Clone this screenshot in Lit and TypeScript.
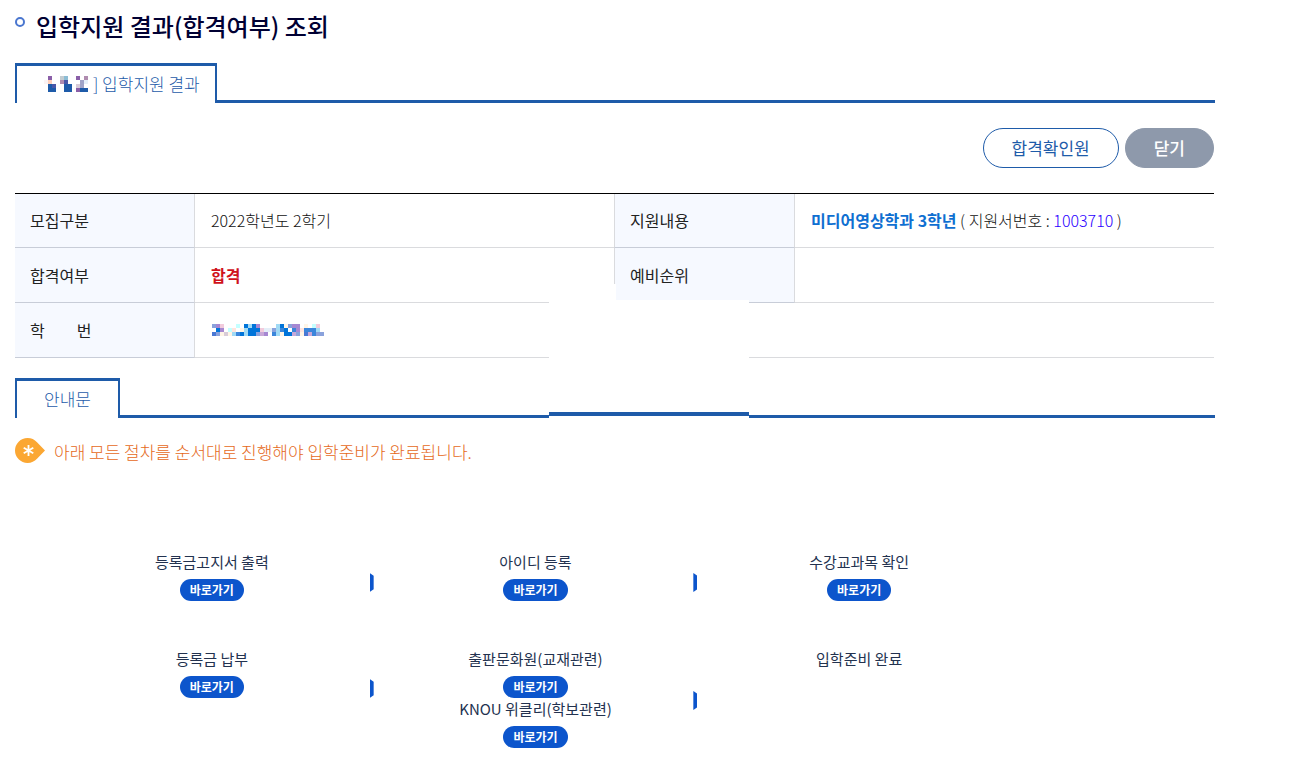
import { LitElement, html, css, svg } from "lit";
import { customElement, property } from "lit/decorators.js";

interface StepLink {
  title: string;
  link: boolean;
}

interface Step {
  items: StepLink[];
  arrow: "" | "high" | "middle" | "low";
}

const STEPS: Step[] = [
  { items: [{ title: "등록금고지서 출력", link: true }], arrow: "high" },
  { items: [{ title: "아이디 등록", link: true }], arrow: "high" },
  { items: [{ title: "수강교과목 확인", link: true }], arrow: "" },
  { items: [{ title: "등록금 납부", link: true }], arrow: "middle" },
  {
    items: [
      { title: "출판문화원(교재관련)", link: true },
      { title: "KNOU 위클리(학보관련)", link: true },
    ],
    arrow: "low",
  },
  { items: [{ title: "입학준비 완료", link: false }], arrow: "" },
];

/* Masked values: one letter per 4px block, "." is an empty block. */
const PALETTE: Record<string, string> = {
  N: "#1e5ba9",
  M: "#4a58a8",
  P: "#8a5fa8",
  L: "#b08cb0",
  K: "#d8ccd8",
  O: "#ffd0bc",
  W: "#fbf3f3",
  G: "#8cbcd4",
  S: "#c4ccd0",
  H: "#a0a4c8",
  B: "#0074d9",
  b: "#3b86db",
  m: "#4a78d4",
  l: "#8aa2dc",
  p: "#a688d2",
  q: "#c8a8d8",
  k: "#f2cbdc",
  c: "#c4ffff",
  s: "#a0daf5",
  o: "#ffe4de",
  y: "#fff5e6",
  g: "#e4eef8",
};

const NAME_BLOCKS = [
  ".P..SG..P.L",
  "WO..LM...Hg",
  ".NM..NN.KH.",
  ".NN..NN.PNN",
];
const NUMBER_BLOCKS = [
  "lpk...c.BsBp....sBylpp.y.ck.",
  ".Bp.co.ysBBBkgglsbB.bpobbbs.",
  "mlyKysbBsBBlqp.bsyBBqlymqbll",
];

@customElement("masked-text")
export class MaskedText extends LitElement {
  @property({ attribute: false }) rows: string[] = [""];

  static styles = css`
    :host {
      display: inline-block;
      line-height: 0;
    }
  `;

  render() {
    const w = this.rows[0].length * 4;
    const h = this.rows.length * 4;
    return html`<svg width=${w} height=${h} viewBox="0 0 ${w} ${h}" shape-rendering="crispEdges" aria-hidden="true">
      ${this.rows.map((row, y) =>
        [...row].map((c, x) =>
          c === "." ? null : svg`<rect x=${x * 4} y=${y * 4} width="4" height="4" fill=${PALETTE[c]} />`
        )
      )}
    </svg>`;
  }
}

@customElement("app-root")
export class AppRoot extends LitElement {
  static styles = css`
    :host {
      display: block;
      box-sizing: border-box;
      max-width: 1215px;
      padding: 8px 0 20px 15px;
      background: #fff;
      color: #111;
      font-family: "Noto Sans CJK KR", "Noto Sans", sans-serif;
      font-size: 16px;
      font-weight: 300;
      line-height: 24px;
    }
    * {
      box-sizing: border-box;
    }
    .heading {
      display: flex;
      gap: 11px;
      margin: 0 0 19px;
      color: #000033;
      font-size: 24px;
      font-weight: 500;
      line-height: 36px;
    }
    .dot {
      flex: none;
      width: 10px;
      height: 10px;
      margin-top: 9px;
      border: 2px solid #4a76cf;
      border-radius: 50%;
    }
    .tabs {
      display: flex;
      height: 40px;
    }
    .tab {
      display: flex;
      align-items: center;
      gap: 5px;
      margin: 0;
      padding: 0 15px 2px 27px;
      border: 2px solid #1e5ba9;
      border-top-width: 3px;
      border-bottom: 0;
      color: #1e5ba9;
      font-size: 17px;
      font-weight: 300;
      white-space: nowrap;
    }
    .tab.short {
      padding-right: 27px;
    }
    .rule {
      flex: 1;
      border-bottom: 3px solid #1e5ba9;
    }
    .actions {
      display: flex;
      justify-content: flex-end;
      gap: 6px;
      padding: 25px 1px 25px 0;
    }
    .btn {
      height: 40px;
      padding: 0 28px;
      border: 1px solid #1e5ba9;
      border-radius: 20px;
      background: #fff;
      color: #1e5ba9;
      font: 400 17px/24px "Noto Sans CJK KR", sans-serif;
      cursor: pointer;
    }
    .btn.close {
      border-color: #8e99ab;
      background: #8e99ab;
      color: #fff;
      font-weight: 500;
    }
    .result {
      position: relative;
    }
    .info {
      width: calc(100% - 1px);
      border-top: 1px solid #000;
      border-collapse: separate;
      border-spacing: 0;
      table-layout: fixed;
      margin-bottom: 20px;
    }
    .info .label {
      width: 180px;
    }
    .info .label.second {
      width: 181px;
    }
    .info th,
    .info td {
      height: 55px;
      padding: 0 16px;
      border-bottom: 1px solid #dadbde;
      text-align: left;
      vertical-align: middle;
    }
    .info tr:first-child th,
    .info tr:first-child td {
      height: 54px;
      padding-bottom: 2px;
    }
    .info th {
      padding-left: 15px;
      border-right: 1px solid #dadbde;
      border-bottom-color: #c8cdd8;
      background: #f6f9ff;
      color: #222;
      font-weight: 400;
    }
    .info td + th {
      border-left: 1px solid #dadbde;
    }
    .info masked-text {
      display: block;
      margin-left: 1px;
    }
    .spread {
      display: flex;
      gap: 32px;
    }
    .pass {
      color: #d0121b;
      font-weight: 700;
    }
    .major {
      color: #0f6fd1;
      font-weight: 700;
    }
    .number {
      color: #2a00ff;
    }
    .cover {
      position: absolute;
      top: 107px;
      bottom: 0;
      left: 534px;
      width: 200px;
      background: #fff;
    }
    .cover::before {
      content: "";
      position: absolute;
      top: -16px;
      left: 0;
      width: 67px;
      height: 16px;
      background: #fff;
    }
    .cover::after {
      content: "";
      position: absolute;
      bottom: 2px;
      left: 0;
      width: 100%;
      height: 4px;
      background: #1e5ba9;
    }
    .notice {
      display: flex;
      gap: 9px;
      margin: 20px 0 0;
      color: #e5691a;
      font-size: 17px;
      line-height: 28px;
    }
    .mark {
      flex: none;
      width: 30px;
      height: 25px;
    }
    .steps {
      display: grid;
      grid-template-columns: repeat(3, 1fr);
      max-width: 971px;
      margin: 85px 0 0 35px;
      padding: 0;
      list-style: none;
      row-gap: 47px;
      color: #23324f;
      font-size: 15px;
      font-weight: 400;
      line-height: 22px;
    }
    .step {
      display: flex;
    }
    .body {
      flex: 1;
    }
    .item {
      display: flex;
      flex-direction: column;
      align-items: center;
      gap: 6px;
    }
    .go {
      height: 22px;
      padding: 0 10px;
      border-radius: 11px;
      background: #0c55cc;
      color: #fff;
      font-size: 12px;
      font-weight: 700;
      line-height: 22px;
      text-decoration: none;
    }
    .arrow {
      flex: none;
      width: 4px;
      height: 19px;
      margin-left: -4px;
      background: #0c55cc;
      clip-path: polygon(0 0, 100% 15%, 100% 85%, 0 100%);
    }
    .high {
      margin-top: 22px;
    }
    .middle {
      margin-top: 31px;
    }
    .low {
      margin-top: 43px;
    }
  `;

  private renderStep(step: Step) {
    return html`<li class="step">
      <div class="body">
        ${step.items.map(
          (item) => html`<div class="item">
            <span>${item.title}</span>
            ${item.link ? html`<a class="go" href="#">바로가기</a>` : null}
          </div>`
        )}
      </div>
      ${step.arrow ? html`<span class="arrow ${step.arrow}"></span>` : null}
    </li>`;
  }

  render() {
    return html`
      <h1 class="heading"><span class="dot"></span>입학지원 결과(합격여부) 조회</h1>
      <div class="tabs">
        <h2 class="tab"><masked-text .rows=${NAME_BLOCKS}></masked-text>] 입학지원 결과</h2>
        <span class="rule"></span>
      </div>
      <div class="actions">
        <button class="btn" type="button">합격확인원</button>
        <button class="btn close" type="button">닫기</button>
      </div>
      <div class="result">
        <table class="info">
          <colgroup>
            <col class="label" />
            <col />
            <col class="label second" />
            <col />
          </colgroup>
          <tbody>
            <tr>
              <th scope="row">모집구분</th>
              <td>2022학년도 2학기</td>
              <th scope="row">지원내용</th>
              <td><strong class="major">미디어영상학과 3학년</strong> ( 지원서번호 : <span class="number">1003710</span> )</td>
            </tr>
            <tr>
              <th scope="row">합격여부</th>
              <td><strong class="pass">합격</strong></td>
              <th scope="row">예비순위</th>
              <td></td>
            </tr>
            <tr>
              <th scope="row"><span class="spread"><span>학</span><span>번</span></span></th>
              <td colspan="3"><masked-text .rows=${NUMBER_BLOCKS}></masked-text></td>
            </tr>
          </tbody>
        </table>
        <div class="tabs">
          <h2 class="tab short">안내문</h2>
          <span class="rule"></span>
        </div>
        <div class="cover"></div>
      </div>
      <p class="notice">
        <svg class="mark" viewBox="0 0 30 25" aria-hidden="true">
          <path fill="#fba733" d="M12.5 0C16.5 0 19.5 1.6 22 4.2L30 12.5L22 20.8C19.5 23.4 16.5 25 12.5 25A12.5 12.5 0 0 1 12.5 0Z" />
          <path stroke="#fff" stroke-width="1.8" d="M13.5 7V18M8.7 9.7L18.3 15.3M18.3 9.7L8.7 15.3" />
        </svg>
        아래 모든 절차를 순서대로 진행해야 입학준비가 완료됩니다.
      </p>
      <ul class="steps">
        ${STEPS.map((s) => this.renderStep(s))}
      </ul>
    `;
  }
}
